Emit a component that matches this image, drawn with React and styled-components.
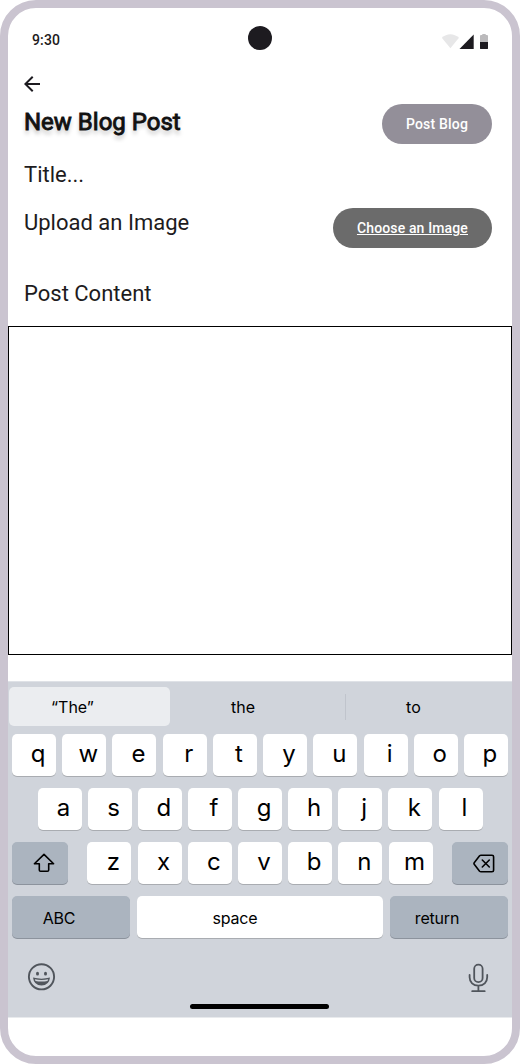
import React from 'react';
import styled, { createGlobalStyle } from 'styled-components';

const GlobalStyle = createGlobalStyle`
  *, *::before, *::after { box-sizing: border-box; }
  body { margin: 0; background: #fff; }
  button { border: 0; padding: 0; margin: 0; font: inherit; color: inherit; }
`;

const Phone = styled.main`
  width: 520px;
  height: 1064px;
  border: 8px solid #cac4d0;
  border-radius: 36px;
  background: #fff;
  color: #1d1b20;
  font-family: Roboto, sans-serif;
  overflow: hidden;
  display: flex;
  flex-direction: column;
`;

const StatusBar = styled.header`
  height: 52px;
  padding: 18px 24px 0;
  display: grid;
  grid-template-columns: 1fr 24px 1fr;
  align-items: start;
`;

const Clock = styled.span`
  padding-top: 4px;
  font-size: 14px;
  font-weight: 500;
  line-height: 20px;
  letter-spacing: 0.14px;
`;

const Camera = styled.span`
  width: 24px;
  height: 24px;
  border-radius: 50%;
  background: #1d1b20;
`;

const StatusIcons = styled.svg`
  justify-self: end;
  margin-top: 7px;
  display: block;
`;

const BackButton = styled.button`
  width: 24px;
  height: 24px;
  margin: 12px 0 0 12px;
  background: none;
  svg { display: block; }
`;

const FormRow = styled.section`
  height: ${(p) => p.$height}px;
  padding: ${(p) => p.$top || 0}px 20px 0 16px;
  display: flex;
  align-items: flex-start;
  justify-content: space-between;
`;

const Heading = styled.h1`
  margin: 4px 0 0;
  font-size: 24px;
  font-weight: 400;
  line-height: 28px;
  letter-spacing: 0;
  color: #111;
  -webkit-text-stroke: 0.9px #111;
  text-shadow: 0 4px 4px rgba(0, 0, 0, 0.25);
`;

const FieldLabel = styled.label`
  padding-top: 1px;
  font-size: 22px;
  line-height: 28px;
`;

const PillButton = styled.button`
  height: 40px;
  padding: 0 24px;
  border-radius: 20px;
  background: ${(p) => p.$color};
  color: #fff;
  font-size: 14px;
  font-weight: 500;
  line-height: 20px;
  letter-spacing: ${(p) => p.$spacing}px;
  text-decoration: ${(p) => (p.$underlined ? 'underline' : 'none')};
  white-space: nowrap;
`;

const ContentBox = styled.div`
  height: 329px;
  flex: none;
  border: 1px solid #000;
`;

const Keyboard = styled.section`
  height: 337px;
  flex: none;
  margin-top: 26px;
  padding-top: 5px;
  background: #d0d4db;
  border-top: 1px solid #dfe2e7;
  border-bottom: 1px solid #e8eaed;
  color: #000;
  font-family: Inter, sans-serif;
`;

const Suggestions = styled.div`
  height: 47px;
  padding-left: 1px;
  display: flex;
  align-items: flex-start;
`;

const Suggestion = styled.div`
  width: ${(p) => p.$width}px;
  height: 39px;
  padding-left: ${(p) => p.$inset}px;
  border-radius: 5px;
  background: ${(p) => (p.$active ? '#ebedf0' : 'transparent')};
  font-size: 16px;
  line-height: 40px;
`;

const Divider = styled.span`
  width: 1px;
  height: 26px;
  margin-top: 7px;
  background: #c0c4cc;
`;

const KeyRow = styled.div`
  height: 54px;
  padding: 0 ${(p) => p.$side || 4}px;
  display: flex;
  justify-content: space-between;
`;

const LetterGroup = styled.div`
  width: 345.4px;
  display: flex;
  justify-content: space-between;
`;

const Key = styled.button`
  width: ${(p) => p.$width || 44}px;
  height: 42px;
  padding-left: ${(p) => p.$shift ?? 8}px;
  padding-right: ${(p) => p.$back || 0}px;
  display: flex;
  align-items: center;
  justify-content: center;
  border-radius: 5px;
  background: ${(p) => (p.$dark ? '#abb4bf' : '#fff')};
  box-shadow: 0 1px 0 ${(p) => (p.$dark ? '#8c939d' : '#a9acb1')};
  font-size: ${(p) => (p.$word ? 16 : 24)}px;
  line-height: 30px;
  letter-spacing: ${(p) => (p.$word ? -0.2 : 0)}px;
`;

const KeyLabel = styled.span`
  padding-top: ${(p) => p.$drop || 0}px;
  padding-bottom: ${(p) => p.$raise ?? 3}px;
`;

const Tools = styled.div`
  height: 52px;
  padding: 12px 22px 0 19px;
  display: flex;
  align-items: flex-start;
  justify-content: space-between;
  svg { display: block; }
`;

const HomeIndicator = styled.div`
  width: 139px;
  height: 5px;
  margin: 2px auto 0 182px;
  border-radius: 3px;
  background: #000;
`;

const letters = (text) =>
  text.split('').map((c) => (
    <Key key={c}>
      <KeyLabel>{c}</KeyLabel>
    </Key>
  ));

export default function App() {
  return (
    <>
      <GlobalStyle />
      <Phone>
        <StatusBar>
          <Clock>9:30</Clock>
          <Camera />
          <StatusIcons width="47" height="17" viewBox="0 0 47 17">
            <path d="M0.8 4.8C5.7 0 13 0 18 4.8L9.4 15.3Z" fill="#e7e7e8" />
            <path d="M18.5 16H32.7V1.5Z" fill="#1d1b20" />
            <path d="M39 9V3a1 1 0 0 1 1-1h1.3V1h3.4v1H46a1 1 0 0 1 1 1v6Z" fill="#bbbabc" />
            <path d="M39 9h8v6.6a.4.4 0 0 1-.4.4h-7.2a.4.4 0 0 1-.4-.4Z" fill="#1d1b20" />
          </StatusIcons>
        </StatusBar>

        <BackButton aria-label="Back">
          <svg width="24" height="24" viewBox="0 0 24 24" fill="#1d1b20">
            <path d="M7.825 13 13.425 18.6 12 20 4 12l8-8 1.425 1.4L7.825 11H20v2Z" />
          </svg>
        </BackButton>

        <FormRow $height={64} $top={8}>
          <Heading>New Blog Post</Heading>
          <PillButton $color="#938f99" $spacing={0.18}>Post Blog</PillButton>
        </FormRow>
        <FormRow $height={48}>
          <FieldLabel>Title...</FieldLabel>
        </FormRow>
        <FormRow $height={71}>
          <FieldLabel>Upload an Image</FieldLabel>
          <PillButton $color="#6b6b6b" $spacing={0.14} $underlined>Choose an Image</PillButton>
        </FormRow>
        <FormRow $height={47}>
          <FieldLabel>Post Content</FieldLabel>
        </FormRow>
        <ContentBox role="textbox" aria-label="Post Content" />

        <Keyboard>
          <Suggestions>
            <Suggestion $active $width={161} $inset={42}>“The”</Suggestion>
            <Suggestion $width={174.5} $inset={61}>the</Suggestion>
            <Divider />
            <Suggestion $width={160} $inset={60.6}>to</Suggestion>
          </Suggestions>
          <KeyRow>{letters('qwertyuiop')}</KeyRow>
          <KeyRow $side={29.5}>{letters('asdfghjkl')}</KeyRow>
          <KeyRow>
            <Key $dark $width={56} aria-label="Shift">
              <svg width="22" height="20" viewBox="0 0 22 20" fill="none" stroke="#000" strokeWidth="1.6" strokeLinejoin="round">
                <path d="M11 1.4 1.4 10.8H6.3V17q0 1.3 1.3 1.3h6.8q1.3 0 1.3-1.3v-6.2h4.9Z" />
              </svg>
            </Key>
            <LetterGroup>{letters('zxcvbnm')}</LetterGroup>
            <Key $dark $width={56} aria-label="Delete">
              <svg width="22" height="19" viewBox="0 0 22 19" fill="none" stroke="#000" strokeWidth="1.6" strokeLinejoin="round" strokeLinecap="round">
                <path d="M8 1.2h11q1.6 0 1.6 1.6v13.4q0 1.6-1.6 1.6H8q-.8 0-1.4-.6L1.4 10.6q-.9-1.1 0-2.2l5.2-6.6q.6-.6 1.4-.6Z" />
                <path d="m9.3 6 7 7m0-7-7 7" />
              </svg>
            </Key>
          </KeyRow>
          <KeyRow>
            <Key $dark $word $width={118} $shift={0} $back={24}>
              <KeyLabel $raise={0} $drop={2}>ABC</KeyLabel>
            </Key>
            <Key $word $width={245.5} $shift={0} $back={50}>
              <KeyLabel $raise={0} $drop={2}>space</KeyLabel>
            </Key>
            <Key $dark $word $width={118} $shift={0} $back={24}>
              <KeyLabel $raise={0} $drop={2}>return</KeyLabel>
            </Key>
          </KeyRow>
          <Tools>
            <svg width="29" height="29" viewBox="0 0 29 29" fill="none" stroke="#50555c">
              <circle cx="14.5" cy="14.8" r="12.6" strokeWidth="1.9" />
              <ellipse cx="10.5" cy="11.7" rx="1.5" ry="1.9" fill="#50555c" stroke="none" />
              <ellipse cx="18.5" cy="11.7" rx="1.5" ry="1.9" fill="#50555c" stroke="none" />
              <path d="M6 15.6q8.5 2.2 17 0-.9 7.9-8.5 7.9T6 15.6Z" fill="#50555c" stroke="none" />
              <path d="M7.8 17.2q6.7 1.5 13.4 0l-.7 1.7q-6 1.4-12 0Z" fill="#d0d4db" stroke="none" />
            </svg>
            <svg width="23" height="31" viewBox="0 0 23 31" fill="none" stroke="#50555c" strokeWidth="1.8" strokeLinecap="round">
              <rect x="7.2" y="2.6" width="8.4" height="17.6" rx="4.2" />
              <path d="M2.6 13v2.3c0 5 3.6 8.3 8.8 8.3s8.8-3.3 8.8-8.3V13M11.4 23.6v5M5.2 29.2h12.5" />
            </svg>
          </Tools>
          <HomeIndicator />
        </Keyboard>
      </Phone>
    </>
  );
}
